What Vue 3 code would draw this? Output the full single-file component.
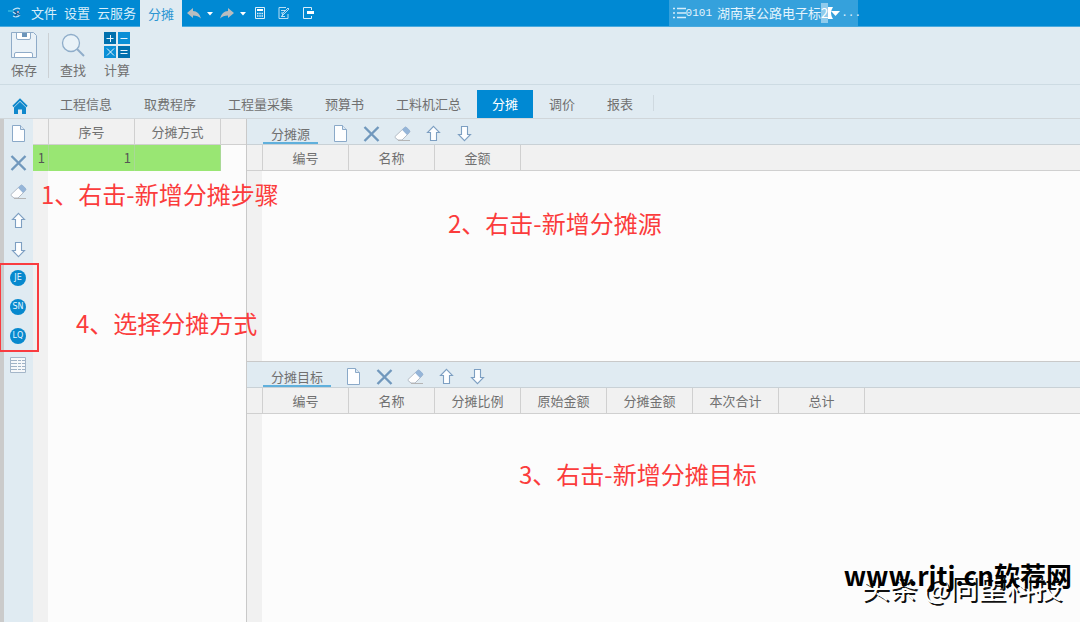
<script setup>
import { h } from 'vue'

const menus = ['文件', '设置', '云服务']
const tabs = ['工程信息', '取费程序', '工程量采集', '预算书', '工料机汇总', '分摊', '调价', '报表']
const tools = [
  { name: 'page', label: '新增' },
  { name: 'cross', label: '删除' },
  { name: 'eraser', label: '清除' },
  { name: 'up', label: '上移' },
  { name: 'down', label: '下移' },
]
const modes = ['JE', 'SN', 'LQ']
const panels = [
  { title: '分摊源', columns: ['编号', '名称', '金额'] },
  { title: '分摊目标', columns: ['编号', '名称', '分摊比例', '原始金额', '分摊金额', '本次合计', '总计'] },
]

const shapes = {
  page: [['path', { d: 'M2.5 .5h8l4 4v12h-12z', fill: '#fdfeff', stroke: '#8aa9c8' }], ['path', { d: 'M10.5 .5v4h4', fill: '#dce8f3', stroke: '#8aa9c8' }]],
  cross: [['path', { d: 'M1.500 2l14 14M15.500 2l-14 14', stroke: '#7198bd', 'stroke-width': 2.4, fill: 'none' }]],
  eraser: [
    ['path', { d: 'M1 11.5L10.5 2.5q1-1 2 0l3 3q.8 1 0 2L8 15H4L1 12.5z', fill: '#fefefe', stroke: '#b4bcc6' }],
    ['path', { d: 'M8 4.8L10.8 2q1-.8 2 .2l3 3q.8 1 0 2L13 10z', fill: '#95b5d8' }],
    ['path', { d: 'M4 15.5h12', stroke: '#b5b5b5' }],
  ],
  up: [['path', { d: 'M8.5 1.3L14.5 7.5H11.5V15.5H5.5V7.5H2.5z', fill: '#fdfeff', stroke: '#7d9fc2', 'stroke-width': 1.1 }]],
  down: [['path', { d: 'M8.5 15.7L14.5 9.5H11.5V1.5H5.5V9.5H2.5z', fill: '#fdfeff', stroke: '#7d9fc2', 'stroke-width': 1.1 }]],
}
const ToolIcon = (props) =>
  h('svg', { width: 17, height: 17, viewBox: '0 0 17 17', 'aria-hidden': 'true' }, shapes[props.name].map(([tag, attrs]) => h(tag, attrs)))
ToolIcon.props = ['name']
</script>

<template>
  <div class="app">
    <header class="titlebar">
      <svg class="logo" width="14" height="12" viewBox="0 0 14 12" aria-hidden="true">
        <path d="M0 4h5" stroke="#4ed0e5" />
        <path d="M5 3q4-3 7-1M5 5q3 3 7 2M5 9q4 2 7-1" fill="none" stroke="#bfe2f5" stroke-width="1.2" />
        <path d="M6 4l6 4M11 4L7 9" stroke="#1d5b93" stroke-width="1.5" />
        <circle cx="10" cy="5" r="1" fill="#e9b8c8" />
      </svg>
      <nav class="menus">
        <button v-for="m in menus" :key="m">{{ m }}</button>
        <button class="current">分摊</button>
      </nav>
      <div class="quick">
        <button aria-label="撤销"><svg width="28" height="14" viewBox="0 0 28 14"><path d="M0 7L6 2v3q6 0 8 7.500Q11 9.500 6 9.500V12z" fill="#b9bdbf" /><path d="M20 6h6l-3 3.500z" fill="#fff" /></svg></button>
        <button aria-label="重做"><svg width="28" height="14" viewBox="0 0 28 14"><path d="M14 7L8 2v3Q2 5 0 12.500q3-3 8-3V12z" fill="#b9bdbf" /><path d="M20 6h6l-3 3.500z" fill="#fff" /></svg></button>
        <button aria-label="计算器"><svg width="11" height="12" viewBox="0 0 11 12"><path d="M.5 .5h9v11h-9z" fill="none" stroke="#d9eefa" /><path d="M2 2h6v2H2z" fill="#fff" /><path d="M2 6.500h6M2 9h6" stroke="#d9eefa" stroke-width="1.500" stroke-dasharray="1.500 .75" /></svg></button>
        <button aria-label="编辑"><svg width="12" height="12" viewBox="0 0 12 12"><path d="M8 .5H1v11h9V7M3 3.500h4M3 6h2M4 9l1-3 5-5 1 1-5 5zM3 9.500h4" fill="none" stroke="#b8def4" /></svg></button>
        <button aria-label="退出"><svg width="12" height="12" viewBox="0 0 12 12"><path d="M9.500 3V.5h-8v11h8V9" fill="none" stroke="#d9eefa" /><path d="M5 4h7v3H5z" fill="#fff" /></svg></button>
      </div>
      <button class="project">
        <svg width="13" height="12" viewBox="0 0 13 12" aria-hidden="true"><path d="M0 1.500h2M0 6h2M0 10.500h2M4 1.500h9M4 6h9M4 10.500h9" stroke="#d6edfa" stroke-width="1.500" /></svg>
        <span class="code">0101</span>
        <span>湖南某公路电子标</span><mark>2</mark>
        <svg width="13" height="12" viewBox="0 0 13 12" aria-hidden="true"><path d="M0 0h5Q1 6 5 12H0z" fill="#fff" /><path d="M3 4h9L7.500 9z" fill="#fff" /></svg>
        <span class="code">...</span>
      </button>
    </header>

    <div class="ribbon">
      <button>
        <svg width="28" height="28" viewBox="0 0 28 28" aria-hidden="true"><path d="M1.500 1.500h22l3 3v22h-25z" fill="#e9f1f7" stroke="#8fabc8" /><path d="M6.500 2v5q0 1.500 1.500 1.500h11q1.500 0 1.500-1.500V2" fill="#fff" stroke="#8fabc8" /><path d="M12 2h5v4h-5z" fill="#6d96bb" /><path d="M4.500 26v-3q0-1.500 1.500-1.500h15q1.500 0 1.500 1.500v3" fill="#fff" stroke="#8fabc8" /></svg>
        <span>保存</span>
      </button>
      <i class="rule"></i>
      <button>
        <svg width="28" height="28" viewBox="0 0 28 28" aria-hidden="true"><circle cx="12" cy="12" r="8.500" fill="#e9f2f8" stroke="#8fadca" stroke-width="1.300" /><path d="M18 18l7 7" stroke="#8fadca" stroke-width="2" /></svg>
        <span>查找</span>
      </button>
      <button>
        <svg width="28" height="28" viewBox="0 0 28 28" aria-hidden="true"><path d="M1 1h12v12H1zM15 15h12v12H15z" fill="#0070ae" /><path d="M15 1h12v12H15zM1 15h12v12H1z" fill="#0a8fd6" /><path d="M3.500 7.500h7M7.500 4v7M17.500 7.500h7M4 17.500l7 7M11 17.500l-7 7M17.500 19.500h7M17.500 22.500h7" stroke="#e8f5fc" /></svg>
        <span>计算</span>
      </button>
    </div>

    <nav class="tabs">
      <button class="home" aria-label="首页"><svg width="16" height="17" viewBox="0 0 16 17"><path d="M1 8.500L8 1.500l7 7" fill="none" stroke="#1088cc" stroke-width="1.800" /><path d="M2 9.500L8 3.800l6 5.700V16h-4v-4.500H6V16H2z" fill="#1088cc" /></svg></button>
      <button v-for="t in tabs" :key="t" :class="{ active: t === '分摊' }">{{ t }}</button>
      <i class="end"></i>
    </nav>

    <main class="workspace">
      <aside class="sidebar">
        <button v-for="t in tools" :key="t.name" :aria-label="t.label"><ToolIcon :name="t.name" /></button>
        <div class="modes">
          <button v-for="m in modes" :key="m"><span>{{ m }}</span></button>
        </div>
        <button aria-label="列表"><svg width="16" height="16" viewBox="0 0 16 16"><path d="M.5 .5h15v15H.5z" fill="#f6f8fa" stroke="#a4b6c9" /><path d="M1 3.500h14M1 6.500h14M1 9.500h14M1 12.500h14" stroke="#9fb2c6" stroke-dasharray="6 1 3 1" /></svg></button>
      </aside>

      <section class="grid steps">
        <table>
          <thead><tr><th class="num"></th><th>序号</th><th>分摊方式</th><th class="fill"></th></tr></thead>
          <tbody><tr><td class="num">1</td><td>1</td><td></td><td class="fill"></td></tr></tbody>
        </table>
        <p class="note first">1、右击-新增分摊步骤</p>
        <p class="note fourth">4、选择分摊方式</p>
      </section>

      <div class="panels">
        <section v-for="(p, i) in panels" :key="p.title" class="panel">
          <div class="panelbar">
            <h2>{{ p.title }}</h2>
            <button v-for="t in tools" :key="t.name" :aria-label="t.label"><ToolIcon :name="t.name" /></button>
          </div>
          <div class="grid">
            <table>
              <thead><tr><th class="num"></th><th v-for="c in p.columns" :key="c">{{ c }}</th><th class="fill"></th></tr></thead>
            </table>
            <p v-if="i === 0" class="note second">2、右击-新增分摊源</p>
            <p v-else class="note third">3、右击-新增分摊目标</p>
          </div>
        </section>
      </div>
    </main>

    <div class="credit">头条 @同望科技</div>
    <div class="site">www.rjtj.cn软荐网</div>
  </div>
</template>

<style>
body { margin: 0; }
</style>

<style scoped>
* { box-sizing: border-box; }
.app {
  position: relative;
  display: flex;
  flex-direction: column;
  min-height: 100vh;
  overflow: hidden;
  background: #e0ebf2;
  color: #707070;
  font: 13px/18px "Noto Sans CJK SC", sans-serif;
}
button { border: 0; padding: 0; background: none; color: inherit; font: inherit; white-space: nowrap; }
svg { display: block; flex: none; }

.titlebar { position: relative; display: flex; height: 27px; background: #0089d3; color: #d8eefa; border-bottom: 1px solid #4aaade; }
.logo { margin: 7px 9px 0 8px; }
.menus { display: flex; gap: 7px; }
.menus .current { width: 42px; margin-left: -3px; height: 27px; background: #e0ebf2; color: #2d96d2; }
.quick { display: flex; align-items: center; gap: 12px; margin-left: 5px; }
.quick button:first-child { margin-right: -7px; }
.quick button:nth-child(2) { margin-right: -5px; }
.project { position: absolute; left: 62%; top: 0; display: flex; align-items: center; height: 26px; width: 189px; margin-left: -1px; padding-left: 4px; background: #35a1dc; color: #e4f4fd; }
.code { font-family: "Liberation Mono", monospace; font-size: 11px; margin: 0 5px 0 0; }
.project mark { background: #8fcbec; color: #fff; line-height: 20px; }
.project .code:last-child { margin: 0; }

.ribbon { display: flex; height: 58px; padding: 4px 0 0 2px; border-bottom: 1px solid #cddbe3; }
.ribbon button { display: flex; flex-direction: column; align-items: center; width: 44px; gap: 2px; height: 48px; }
.rule { width: 1px; height: 45px; margin: 2px 2px 0; background: #cbd0d4; }

.tabs { display: flex; height: 34px; padding-top: 5px; border-bottom: 1px solid #d0d6da; }
.tabs button { padding: 0 16px; }
.tabs .home { width: 44px; padding: 5px 0 0 12px; }
.tabs .active { padding: 0 15px; background: #0089d3; color: #fff; }
.end { width: 1px; height: 16px; margin: 5px 0 0 4px; background: #cfd9e0; }

.workspace { flex: 1; display: flex; }
.sidebar { position: relative; z-index: 2; width: 33px; border-left: 4px solid #cbcbcb; background: #e0ebf2; }
.sidebar button { display: flex; align-items: center; justify-content: center; width: 28px; height: 29px; padding-bottom: 1px; }
.modes { outline: 2px solid #f93c40; outline-offset: -1px; margin: 0 -5px 0 -4px; padding-left: 4px; }
.modes span { width: 16px; height: 16px; border-radius: 50%; background: #0789ce; color: #e5f5ff; font: 8px/16px "DejaVu Sans", sans-serif; }

.grid { position: relative; background: linear-gradient(90deg, #f1f1f1 15px, #fcfcfc 15px); }
.steps { width: 214px; border-right: 1px solid #c9c9c9; }
table { width: 100%; table-layout: fixed; border-collapse: separate; border-spacing: 0; }
th, td { height: 26px; padding: 0; border-right: 1px solid #d0d0d0; }
th { width: 86px; background: #f1f1f1; border-bottom: 1px solid #d0d0d0; font-weight: 400; }
th.num, td.num { width: 16px; }
th.fill { width: auto; border-right: 0; }
td { background: #99e673; border-color: #a9d996; color: #555; text-align: right; padding-right: 3px; }
td.fill { background: none; border: 0; }

.panels { flex: 1; display: grid; grid-template-rows: 13fr 14fr; min-width: 0; }
.panel { display: flex; flex-direction: column; min-height: 0; }
.panel + .panel { border-top: 1px solid #c9c9c9; }
.panel .grid { flex: 1; }
.panelbar { display: flex; height: 26px; padding-left: 16px; border-bottom: 1px solid #c9d1d6; }
.panelbar h2 { height: 25px; margin: 0 6px 0 0; padding: 6px 8px 0; border-bottom: 2px solid #60b0dc; font: inherit; }
.panelbar button { display: flex; align-items: center; justify-content: center; width: 31px; padding-top: 3px; }
.panelbar h2 + button { margin-left: 1px; }

.note { position: absolute; margin: 0; color: #fb3c3c; font-size: 24px; line-height: 32px; white-space: nowrap; z-index: 1; }
.first { left: 8px; top: 59px; }
.fourth { left: 43px; top: 188px; }
.second { left: 201px; top: 62px; }
.third { left: 272px; top: 70px; }

.credit, .site { position: absolute; white-space: nowrap; }
.credit { right: 18px; bottom: 18px; color: #fff; font-size: 28px; line-height: 34px; text-shadow: 2px 2px 0 #111; }
.site { right: 8px; bottom: 29px; color: #000; font-size: 26px; line-height: 36px; font-weight: 700; }
</style>
